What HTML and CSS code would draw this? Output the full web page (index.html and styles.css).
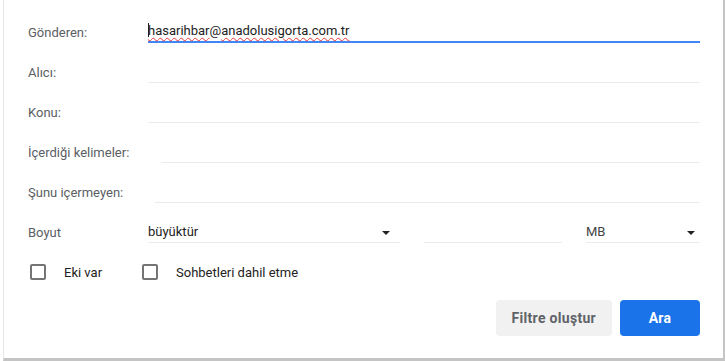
FILE: index.html
```html
<!DOCTYPE html>
<html lang="tr">
<head>
    <meta charset="UTF-8">
    <meta name="viewport" content="width=device-width, initial-scale=1.0">
    <title>Gelişmiş arama</title>
    <link rel="stylesheet" href="styles.css">
</head>
<body>

<div class="search-panel">
    <div class="row">
        <div class="label">Gönderen:</div>
        <div class="field focused"><span class="caret"></span><span class="typo">hasarihbar</span>@<span class="typo">anadolusigorta.com.tr</span></div>
    </div>
    <div class="row">
        <div class="label">Alıcı:</div>
        <div class="field"></div>
    </div>
    <div class="row">
        <div class="label">Konu:</div>
        <div class="field"></div>
    </div>
    <div class="row">
        <div class="label">İçerdiği kelimeler:</div>
        <div class="field"></div>
    </div>
    <div class="row">
        <div class="label">Şunu içermeyen:</div>
        <div class="field"></div>
    </div>
    <div class="row">
        <div class="label">Boyut</div>
        <div class="size-fields">
            <div class="field select">büyüktür<span class="arrow"></span></div>
            <div class="field"></div>
            <div class="field select unit">MB<span class="arrow"></span></div>
        </div>
    </div>

    <div class="checks">
        <label class="check check-first"><span class="box"></span>Eki var</label>
        <label class="check"><span class="box"></span>Sohbetleri dahil etme</label>
    </div>

    <div class="actions">
        <button type="button" class="btn btn-light">Filtre oluştur</button>
        <button type="button" class="btn btn-primary">Ara</button>
    </div>
</div>

</body>
</html>
```

FILE: styles.css
```css
/* Basic Reset */
* {
    box-sizing: border-box;
    margin: 0;
    padding: 0;
}

body {
    background: #fff;
    font-family: Roboto, "Liberation Sans", Arial, sans-serif;
    font-size: 13px;
    color: #222;
}

/* Panel */
.search-panel {
    width: 722px;
    height: 361px;
    margin-left: 3px;
    padding: 3px 23px 0 24px;
    border-left: 1px solid #e6e6e6;
    border-right: 2px solid #c4c4c4;
    border-bottom: 3px solid #c4c4c4;
    background: #fff;
}

/* Form rows */
.row {
    display: flex;
    align-items: flex-end;
    height: 40px;
}

.label {
    flex: none;
    min-width: 120px;
    padding-right: 32px;
    line-height: 16px;
    padding-bottom: 2px;
    color: #5a5e63;
    white-space: nowrap;
}

.field {
    flex: 1;
    position: relative;
    height: 19px;
    line-height: 16px;
    border-bottom: 1px solid #ebebeb;
    color: #222;
    white-space: nowrap;
}

.field.focused {
    height: 20px;
    border-bottom: 2px solid #4285f4;
}

.caret {
    display: inline-block;
    width: 1px;
    height: 14px;
    margin-right: -1px;
    background: #222;
    vertical-align: -2px;
}

.typo {
    text-decoration: underline wavy #e53935;
    text-decoration-thickness: 1px;
    text-underline-offset: 2px;
}

/* Size row */
.size-fields {
    flex: 1;
    display: grid;
    grid-template-columns: 252px 138px 1fr;
    column-gap: 24px;
}

.select .arrow {
    position: absolute;
    right: 10px;
    top: 7px;
    width: 0;
    height: 0;
    border-left: 4px solid transparent;
    border-right: 4px solid transparent;
    border-top: 4px solid #222;
}

.select.unit {
    color: #444;
}

.select.unit .arrow {
    right: 5px;
}

/* Checkboxes */
.checks {
    display: flex;
    align-items: center;
    padding: 21px 0 0 2px;
}

.check {
    display: flex;
    align-items: center;
    gap: 18px;
    color: #222;
}

.check-first {
    width: 112px;
}

.box {
    width: 16px;
    height: 16px;
    border: 2px solid #757575;
    border-radius: 2px;
}

/* Buttons */
.actions {
    display: flex;
    justify-content: flex-end;
    gap: 8px;
    margin-top: 20px;
}

.btn {
    height: 36px;
    min-width: 80px;
    padding: 0 16px;
    border: none;
    border-radius: 4px;
    font-family: Roboto, "Liberation Sans", Arial, sans-serif;
    font-size: 14px;
    font-weight: 700;
    letter-spacing: 0.3px;
    cursor: pointer;
}

.btn-light {
    background: #f1f1f1;
    color: #5f6368;
}

.btn-primary {
    background: #1a73e8;
    color: #fff;
}
```
